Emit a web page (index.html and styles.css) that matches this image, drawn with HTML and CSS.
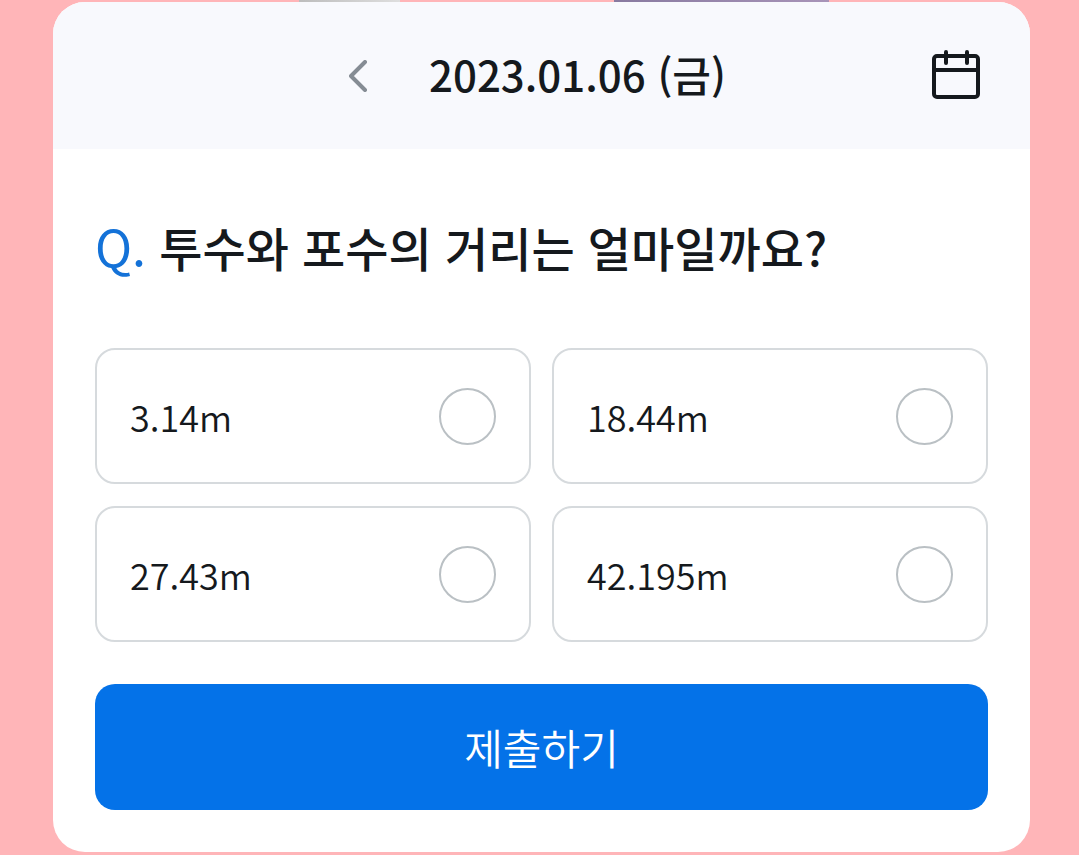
FILE: index.html
```html
<!DOCTYPE html>
<html lang="ko">
<head>
<meta charset="utf-8">
<meta name="viewport" content="width=device-width, initial-scale=1">
<title>Quiz</title>
<link rel="stylesheet" href="styles.css">
</head>
<body>
<div class="backdrop" aria-hidden="true"><span class="peek peek-gray"></span><span class="peek peek-purple"></span></div>
<main class="card">
  <header class="card-header">
    <div class="date-nav">
      <button class="icon-button prev" type="button" aria-label="이전 날짜">
        <svg width="20" height="32" viewBox="0 0 20 32" fill="none" stroke="#858c94" stroke-width="4" stroke-linecap="round" stroke-linejoin="round"><path d="M16 2 2 16l14 14"/></svg>
      </button>
      <h1 class="date">2023.01.06 (금)</h1>
    </div>
    <button class="icon-button calendar" type="button" aria-label="달력">
      <svg width="50" height="52" viewBox="0 0 50 52" fill="none" stroke="#15191d" stroke-width="4" stroke-linecap="round"><rect x="2" y="6" width="44" height="41" rx="3"/><path d="M2 20h44M14 2v11M35 2v11"/></svg>
    </button>
  </header>
  <form class="quiz">
    <h2 class="question" id="question"><span class="mark">Q.</span> 투수와 포수의 거리는 얼마일까요?</h2>
    <div class="options" role="radiogroup" aria-labelledby="question">
      <label class="option"><span>3.14m</span><input type="radio" name="answer"></label>
      <label class="option"><span>18.44m</span><input type="radio" name="answer"></label>
      <label class="option"><span>27.43m</span><input type="radio" name="answer"></label>
      <label class="option"><span>42.195m</span><input type="radio" name="answer"></label>
    </div>
    <button class="submit" type="button">제출하기</button>
  </form>
</main>
</body>
</html>
```
FILE: styles.css
```css
* { box-sizing: border-box; }
body { margin: 0; padding: 2px 49px 3px 53px; background: #ffb5b8; color: #15191d; font-family: "Noto Sans CJK KR", sans-serif; }
h1, h2 { margin: 0; }
button { font: inherit; border: 0; cursor: pointer; }
.backdrop { position: absolute; top: 0; left: 0; width: 100%; height: 2px; }
.peek { position: absolute; top: 0; height: 2px; }
.peek-gray { left: 299px; width: 101px; background: linear-gradient(90deg, #bdbdbd, #dedede); }
.peek-purple { left: 614px; width: 215px; background: linear-gradient(90deg, #887aa0, #a894b8); }
.card { border-radius: 32px; background: #fff; overflow: hidden; }
.card-header { display: grid; grid-template-columns: 1fr auto 1fr; align-items: center; height: 147px; padding: 0 48px; background: #f8f9fd; }
.date-nav { grid-column: 2; display: flex; align-items: center; gap: 60px; padding-right: 8px; }
.icon-button { padding: 0; background: none; }
.icon-button svg { display: block; }
.calendar { justify-self: end; }
.date { padding-bottom: 4px; font-size: 42px; line-height: 60px; font-weight: 500; white-space: nowrap; }
.quiz { padding: 66px 42px 42px; }
.question { font-size: 47px; line-height: 64px; font-weight: 500; }
.mark { color: #1472d8; font-size: 50px; line-height: 1; font-weight: 400; }
.options { display: grid; grid-template-columns: 1fr 1fr; gap: 22px 21px; margin: 69px 0 42px; }
.option { display: flex; align-items: center; justify-content: space-between; height: 136px; padding: 0 33px; border: 2px solid #d6dadd; border-radius: 20px; font-size: 36px; line-height: 56px; font-weight: 350; cursor: pointer; }
.option input { appearance: none; width: 57px; height: 57px; margin: 0; border: 2px solid #bac0c4; border-radius: 50%; }
.option input:checked { border: 16px solid #0472e8; }
.submit { display: block; width: 100%; height: 126px; padding: 0 0 2px; border-radius: 20px; background: #0472e8; color: #fff; font-size: 42px; font-weight: 350; }
```
